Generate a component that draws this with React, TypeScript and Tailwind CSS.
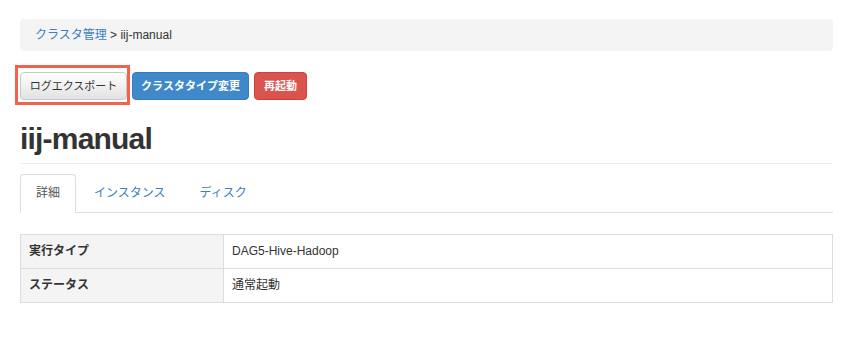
import { useState } from 'react';

const FONT = { fontFamily: '"Liberation Sans", "Noto Sans CJK JP", sans-serif' };

const tabs = ['詳細', 'インスタンス', 'ディスク'];

const rows = [
  { label: '実行タイプ', value: 'DAG5-Hive-Hadoop' },
  { label: 'ステータス', value: '通常起動' },
];

export default function App() {
  const [activeTab, setActiveTab] = useState(0);

  return (
    <div className="min-h-screen bg-white text-[12px] text-[#333]" style={FONT}>
      <div className="pl-[20px] pr-[17px] pt-[19px]">
        {/* Breadcrumb */}
        <div className="bg-[#f4f4f4] rounded-[4px] px-[15px] py-[8px] leading-[16px]">
          <a href="#" className="text-[#3a7fc1]">クラスタ管理</a>
          <span> &gt; iij-manual</span>
        </div>

        {/* Action buttons */}
        <div className="flex items-center gap-[5px] mt-[21px] text-[11px]">
          <div className="relative">
            <button className="w-[107px] h-[28px] rounded-[4px] border border-[#c8c8c8] bg-gradient-to-b from-white to-[#e2e2e2] text-[#333] flex items-center justify-center">
              ログエクスポート
            </button>
            <span className="absolute -left-[5px] -top-[7px] -right-[3px] -bottom-[5px] border-[3px] border-[#f4614c] pointer-events-none" />
          </div>
          <button className="w-[117px] h-[28px] rounded-[4px] border border-[#357ebd] bg-[#3f89ca] text-white font-bold flex items-center justify-center">
            クラスタタイプ変更
          </button>
          <button className="w-[53px] h-[28px] rounded-[4px] border border-[#d43f3a] bg-[#d9534f] text-white font-bold flex items-center justify-center">
            再起動
          </button>
        </div>

        {/* Page header */}
        <h1 className="mt-[22px] text-[30px] leading-[33px] font-bold tracking-[-0.8px] text-[#333] pb-[8px] border-b border-[#eeeeee]">
          iij-manual
        </h1>

        {/* Tabs */}
        <ul className="flex mt-[10px] border-b border-[#dddddd]">
          {tabs.map((tab, i) => (
            <li key={tab} className="-mb-px mr-[2px]">
              <button
                onClick={() => setActiveTab(i)}
                className={`px-[15px] py-[10px] leading-[17px] rounded-t-[4px] border ${
                  activeTab === i
                    ? 'border-[#dddddd] border-b-transparent bg-white text-[#555]'
                    : 'border-transparent text-[#3a7fc1]'
                }`}
              >
                {tab}
              </button>
            </li>
          ))}
        </ul>

        {/* Detail table */}
        <table className="w-full mt-[21px] border-collapse border border-[#dddddd]">
          <tbody>
            {rows.map((row) => (
              <tr key={row.label}>
                <th className="w-1/4 bg-[#f4f4f4] border border-[#dddddd] px-[8px] py-[8px] leading-[17px] text-left font-bold">
                  {row.label}
                </th>
                <td className="border border-[#dddddd] px-[8px] py-[8px] leading-[17px]">{row.value}</td>
              </tr>
            ))}
          </tbody>
        </table>
      </div>
    </div>
  );
}
